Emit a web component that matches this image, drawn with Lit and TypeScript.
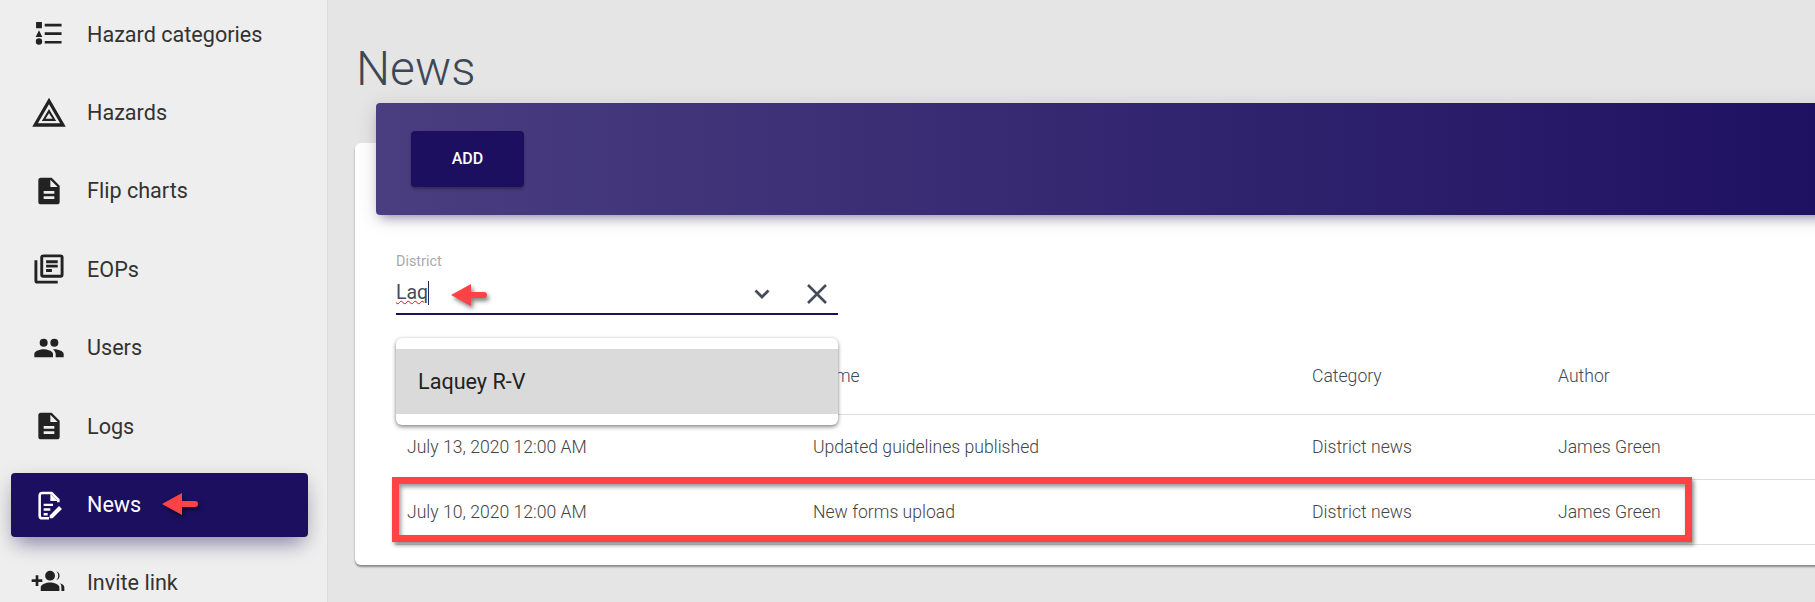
import { LitElement, html, css, svg } from "lit";
import { customElement } from "lit/decorators.js";

const ICONS: Record<string, { box: string; d: unknown }> = {
  cats: { box: "0 0 24 24", d: svg`<path d="M2.300 3h4.400v4.600H2.300zM4.500 9.200l2.500 5H2zM4.500 15.200a2.400 2.400 0 1 1 0 4.800 2.400 2.400 0 0 1 0-4.800zM8.800 4.400h12.600v2H8.800zM8.800 10.700h12.600v2H8.800zM8.800 17.200h12.600v2H8.800z"/>` },
  hazard: { box: "1.500 1 21 21", d: svg`<path fill-rule="evenodd" d="M12 1.500 1 20.500h22zM12 5.800l7.300 12.400H4.700zM12 8.800 7.300 16.800h9.400zM12 11.700l2.300 3.500H9.700z"/>` },
  doc: { box: "0 0 24 24", d: svg`<path d="M14 2H6a2 2 0 0 0-2 2v16a2 2 0 0 0 2 2h12a2 2 0 0 0 2-2V8zm2 16H8v-2h8zm0-4H8v-2h8zm-3-5V3.500L18.500 9z"/>` },
  eop: { box: "1 1 22 22", d: svg`<path d="M4 6H2v14a2 2 0 0 0 2 2h14v-2H4zm16-4H8a2 2 0 0 0-2 2v12a2 2 0 0 0 2 2h12a2 2 0 0 0 2-2V4a2 2 0 0 0-2-2zm0 14H8V4h12zM10 9h8v2h-8zm0 3h4v2h-4zm0-6h8v2h-8z"/>` },
  users: { box: "0 0 24 24", d: svg`<path d="M16 11a3 3 0 1 0 0-6 3 3 0 0 0 0 6zm-8 0a3 3 0 1 0 0-6 3 3 0 0 0 0 6zm0 2c-2.300 0-7 1.200-7 3.500V19h14v-2.500C15 14.200 10.300 13 8 13zm8 0c-.3 0-.6 0-1 .1 1.200.8 2 2 2 3.400V19h6v-2.500c0-2.300-4.700-3.500-7-3.500z"/>` },
  news: { box: "0 0 24 24", d: svg`<path fill="none" stroke="currentColor" stroke-width="1.900" d="M19 10V8l-5-5H7a2 2 0 0 0-2 2v15a2 2 0 0 0 2 2h5"/><path d="M13 3.500V9h5.500zM8 11h7v1.800H8zM8 14.500h5v1.800H8zM8 18h3v1.800H8zM19.500 12.800l2.200 2.200-7 7H12.500v-2.200z"/>` },
  invite: { box: "0 0 24 24", d: svg`<path d="M-1 9.200h3V6.200h2v3h3v2H4v3H2v-3H-1zM12.800 2.800a3.700 3.700 0 1 1 0 7.400 3.700 3.700 0 0 1 0-7.400zM12.800 11.600c-2.700 0-7 1.200-7 3.600v2.800h14v-2.800c0-2.400-4.300-3.600-7-3.600zM17.500 3.100a3.600 3.600 0 0 1 0 6.800c.9-1 1.400-2.100 1.400-3.400s-.5-2.500-1.400-3.400zM20.300 12.200c1.700.6 3.200 1.600 3.200 3V18h-2.200v-2.800c0-1.200-.4-2.200-1-3z"/>` },
};

const NAV = [
  ["Hazard categories", "cats", false],
  ["Hazards", "hazard", false],
  ["Flip charts", "doc", false],
  ["EOPs", "eop", false],
  ["Users", "users", false],
  ["Logs", "doc", false],
  ["News", "news", true],
  ["Invite link", "invite", false],
] as const;

const ROWS = [
  ["July 13, 2020 12:00 AM", "Updated guidelines published", "District news", "James Green"],
  ["July 10, 2020 12:00 AM", "New forms upload", "District news", "James Green"],
];

const arrow = html`<svg class="arrow" viewBox="0 0 36 22" width="36" height="22"><path d="M0 11 20 0v8h13a3 3 0 0 1 0 6H20v8z" fill="#ff4246"/></svg>`;

@customElement("app-root")
export class AppRoot extends LitElement {
  static styles = css`
    :host { display: block; width: 1815px; height: 602px; overflow: hidden; font-family: Roboto, sans-serif; background: #e5e5e5; position: relative; }
    .shell { display: flex; height: 602px; overflow: hidden; }
    .side { box-sizing: border-box; width: 328px; flex: none; height: 602px; overflow: hidden; background: #eee; border-right: 1px solid #ddd; padding: 2.200px 19px 0 11px; display: flex; flex-direction: column; gap: 14.400px; }
    .item { flex: none; height: 64px; border-radius: 4px; display: flex; align-items: center; padding-left: 22px; gap: 22px; font-size: 21.600px; color: #333; }
    .item > svg { width: 32px; height: 32px; fill: #222; flex: none; overflow: visible; }
    .item.on { background: #1d0f60; color: #fff; box-shadow: 0 12px 20px -6px rgba(29,15,96,.4), 0 4px 20px rgba(0,0,0,.12); }
    .item.on > svg { fill: #fff; color: #fff; }
    .item .arr { display: flex; margin-left: -1px; margin-top: -2px; filter: drop-shadow(2px 3px 2px rgba(0,0,0,.5)); }
    .main { flex: 1; min-width: 0; position: relative; overflow: hidden; padding-left: 27px; }
    h1 { margin: 41px 0 46px 1px; font-size: 48px; line-height: 56px; font-weight: 300; color: #3c4858; height: 56px; }
    .card { position: relative; margin-right: -60px; height: 422px; box-sizing: border-box; background: #fff; border-radius: 6px; box-shadow: 0 2px 2px rgba(0,0,0,.4); }
    .head { position: relative; top: -40px; margin-left: 21px; height: 112px; border-radius: 4px; background: linear-gradient(90deg, #4a3e80, #1d0f60); box-shadow: 0 4px 20px rgba(0,0,0,.14), 0 7px 10px -5px rgba(29,15,96,.4); display: flex; align-items: center; padding-left: 35px; }
    .add { width: 113px; height: 56px; margin-top: -1px; border-radius: 4px; background: #1d0f60; color: #fff; font-size: 16px; font-weight: 500; display: flex; align-items: center; justify-content: center; box-sizing: border-box; box-shadow: 0 2px 3px rgba(0,0,0,.3); }
    .field { position: absolute; left: 41px; top: 110px; width: 442px; height: 62px; padding-top: 1px; border-bottom: 2px solid #1d0f60; box-sizing: border-box; }
    .label { font-size: 14.400px; line-height: 16px; color: #aaa; }
    .val { font-size: 19.500px; line-height: 24px; color: #444c59; margin-top: 11px; display: flex; align-items: center; }
    .typed { text-decoration: underline wavy #e11 1px; border-right: 1px solid #1d2a60; }
    .chev, .x { position: absolute; fill: none; stroke: #444c59; }
    .chev { left: 357px; top: 35px; }
    .x { left: 410px; top: 30px; }
    .farr { position: absolute; left: 55px; top: 31px; display: flex; filter: drop-shadow(2px 3px 2px rgba(0,0,0,.5)); }
    .menu { position: absolute; z-index: 3; left: 41px; top: 195px; width: 442px; height: 87px; box-sizing: border-box; padding: 11px 0; background: #fff; border-radius: 6px; box-shadow: 0 2px 4px rgba(0,0,0,.45), 0 0 3px rgba(0,0,0,.1); }
    .opt { height: 65px; background: #dadada; display: flex; align-items: center; padding-left: 22px; font-size: 21.600px; color: #222; }
    .table { position: absolute; left: 41px; right: 0; top: 195px; font-size: 17.600px; font-weight: 300; color: #444; }
    .row { display: grid; grid-template-columns: 406px 499px 246px 1fr; height: 65px; align-items: center; border-bottom: 1px solid #ddd; box-sizing: border-box; padding-left: 11px; }
    .row.h { height: 77px; color: #3c4858; }
    .mark { position: absolute; z-index: 2; left: 64px; top: 477px; width: 1300px; height: 65px; box-sizing: border-box; border: 7px solid #ff4246; box-shadow: 2px 3px 4px rgba(0,0,0,.45), inset 2px 3px 4px rgba(0,0,0,.4); pointer-events: none; }
  `;

  render() {
    return html`<div class="shell">
      <nav class="side">
        ${NAV.map(([t, i, on]) => html`<div class="item ${on ? "on" : ""}">
          <svg viewBox=${ICONS[i].box}>${ICONS[i].d}</svg><span>${t}</span>
          ${on ? html`<span class="arr">${arrow}</span>` : ""}
        </div>`)}
      </nav>
      <main class="main">
        <h1>News</h1>
        <section class="card">
          <div class="head"><div class="add">ADD</div></div>
          <div class="field">
            <div class="label">District</div>
            <div class="val"><span class="typed">Laq</span></div>
            <span class="farr">${arrow}</span>
            <svg class="chev" width="18" height="12" viewBox="0 0 18 12" stroke-width="2.800"><path d="M2.500 2.500 9 9l6.500-6.500"/></svg>
            <svg class="x" width="22" height="22" viewBox="0 0 22 22" stroke-width="2.600"><path d="M2 2l18 18M20 2 2 20"/></svg>
          </div>
          <div class="table">
            <div class="row h"><span></span><span>Name</span><span>Category</span><span>Author</span></div>
            ${ROWS.map((r) => html`<div class="row">${r.map((c) => html`<span>${c}</span>`)}</div>`)}
          </div>
          <div class="menu"><div class="opt">Laquey R-V</div></div>
        </section>
        <div class="mark"></div>
      </main>
    </div>`;
  }
}
